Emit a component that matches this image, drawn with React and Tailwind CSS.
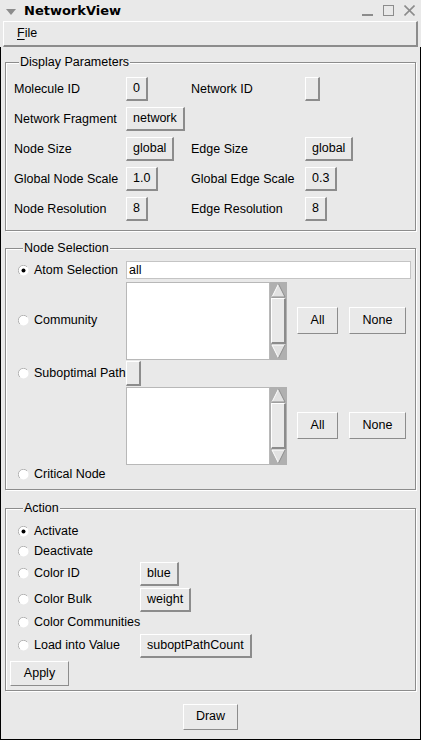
import React from 'react';

const raised =
  'flex items-center bg-[#e9e9e9] border-t border-l border-r-2 border-b-2 border-white border-r-[#8c8c8c] border-b-[#8c8c8c]';
const flat =
  'flex items-center justify-center bg-[#e9e9e9] border border-t-white border-l-white border-r-[#8c8c8c] border-b-[#8c8c8c]';
const groove =
  'border border-[#8c8c8c] shadow-[inset_1px_1px_0_#fff,1px_1px_0_#fff]';

function MenuBtn({ children, w }) {
  return <div className={`${raised} h-[24px] px-[6px] ${w || ''}`}>{children}</div>;
}

function Radio({ checked, label }) {
  return (
    <div className="flex items-center gap-[5px]">
      <svg width="11" height="11" viewBox="0 0 11 11">
        <circle cx="5.5" cy="5.5" r="5" fill="#fff" />
        <path d="M1.8 9 A5 5 0 0 1 9 1.8" stroke="#b4b4b4" strokeWidth="1" fill="none" />
        {checked && <circle cx="5.5" cy="5.5" r="2" fill="#000" />}
      </svg>
      <span>{label}</span>
    </div>
  );
}

function Frame({ title, className, children }) {
  return (
    <fieldset className={`mx-[4px] ${groove} ${className}`}>
      <legend className="ml-[5px] px-[1px] bg-[#e9e9e9] leading-[15px]">{title}</legend>
      {children}
    </fieldset>
  );
}

function Arrow({ up }) {
  return (
    <svg width="15" height="15" viewBox="0 0 15 15" className="block">
      {up ? (
        <>
          <polygon points="7.5,1 14,14 1,14" fill="#e2e2e2" />
          <path d="M1 14 L7.5 1" stroke="#fff" />
          <path d="M7.5 1 L14 14 L1 14" stroke="#8c8c8c" fill="none" />
        </>
      ) : (
        <>
          <polygon points="1,1 14,1 7.5,14" fill="#e2e2e2" />
          <path d="M1 1 L14 1 M1 1 L7.5 14" stroke="#fff" fill="none" />
          <path d="M14 1 L7.5 14" stroke="#8c8c8c" />
        </>
      )}
    </svg>
  );
}

function ListWithScroll() {
  return (
    <div className="flex h-[78px]">
      <div className="w-[144px] bg-white border border-[#b8b8b8]" />
      <div className="w-[17px] bg-[#b0b0b0] flex flex-col p-[1px]">
        <Arrow up />
        <div className={`flex-1 ${raised} border-r border-b border-r-[#8c8c8c] border-b-[#8c8c8c]`} />
        <Arrow />
      </div>
    </div>
  );
}

function AllNone() {
  return (
    <div className="flex items-center gap-[11px] ml-[10px]">
      <div className={`${flat} w-[41px] h-[27px]`}>All</div>
      <div className={`${flat} w-[57px] h-[27px]`}>None</div>
    </div>
  );
}

export default function App() {
  return (
    <div className="w-[421px] h-[740px] bg-[#e9e9e9] flex flex-col text-[12.5px] text-black font-['Liberation_Sans',Arial,sans-serif] overflow-hidden">
      {/* title bar */}
      <div className="h-[21px] flex items-center shrink-0">
        <svg width="10" height="6" viewBox="0 0 10 6" className="ml-[6px] mt-[2px]">
          <polygon points="0,0 10,0 5,6" fill="#8c8c8c" />
        </svg>
        <span className="ml-[8px] font-['DejaVu_Sans',sans-serif] font-bold text-[13px]">NetworkView</span>
        <div className="ml-auto mr-[6px] flex items-center gap-[10px]">
          <svg width="11" height="12" viewBox="0 0 11 12">
            <rect x="0" y="9" width="11" height="2" fill="#8c8c8c" />
          </svg>
          <svg width="11" height="12" viewBox="0 0 11 12">
            <rect x="0.5" y="0.5" width="10" height="10" fill="none" stroke="#8c8c8c" />
          </svg>
          <svg width="11" height="12" viewBox="0 0 11 12">
            <path d="M0.5 0.5 L10.5 10.5 M10.5 0.5 L0.5 10.5" stroke="#8c8c8c" strokeWidth="1.6" />
          </svg>
        </div>
      </div>

      {/* menubar */}
      <div className="px-[3px] shrink-0">
        <div className={`${raised} h-[26px] pl-[13px]`}>
          <span>
            <span className="underline underline-offset-2">F</span>ile
          </span>
        </div>
      </div>

      <div className="flex-1 flex flex-col border-l border-r border-b border-black">
        <Frame title="Display Parameters" className="mt-[8px] pl-[8px] pt-[7px] pb-[9px]">
          <div className="grid grid-cols-[112px_65px_114px_1fr] auto-rows-[24px] gap-y-[6px] items-center">
            <span>Molecule ID</span>
            <div className="flex"><MenuBtn>0</MenuBtn></div>
            <span>Network ID</span>
            <div className="flex"><MenuBtn w="w-[15px] px-0" /></div>

            <span>Network Fragment</span>
            <div className="flex col-span-3"><MenuBtn>network</MenuBtn></div>

            <span>Node Size</span>
            <div className="flex"><MenuBtn>global</MenuBtn></div>
            <span>Edge Size</span>
            <div className="flex"><MenuBtn>global</MenuBtn></div>

            <span>Global Node Scale</span>
            <div className="flex"><MenuBtn>1.0</MenuBtn></div>
            <span>Global Edge Scale</span>
            <div className="flex"><MenuBtn>0.3</MenuBtn></div>

            <span>Node Resolution</span>
            <div className="flex"><MenuBtn>8</MenuBtn></div>
            <span>Edge Resolution</span>
            <div className="flex"><MenuBtn>8</MenuBtn></div>
          </div>
        </Frame>

        <Frame title="Node Selection" className="mt-[10px] pl-[12px] pr-[4px] pt-[5px] pb-[6px]">
          <div className="grid grid-cols-[108px_1fr] items-center">
            <Radio checked label="Atom Selection" />
            <div className="h-[18px] bg-white border border-[#c4c4c4] flex items-center pl-[2px]">all</div>

            <div className="col-span-2 h-[2px]" />
            <Radio label="Community" />
            <div className="flex items-center">
              <ListWithScroll />
              <AllNone />
            </div>

            <div className="col-span-2 h-[1px]" />
            <Radio label="Suboptimal Path" />
            <div className="flex"><MenuBtn w="w-[15px] h-[25px] px-0" /></div>

            <div className="col-span-2 h-[1px]" />
            <div />
            <div className="flex items-center">
              <ListWithScroll />
              <AllNone />
            </div>

            <div className="col-span-2 h-[2px]" />
            <div className="h-[16px] flex items-center">
              <Radio label="Critical Node" />
            </div>
          </div>
        </Frame>

        <Frame title="Action" className="mt-[11px] pl-[12px] pt-[6px] pb-[4px]">
          <div className="grid grid-cols-[122px_1fr] items-center">
            <div className="h-[20px] flex items-center"><Radio checked label="Activate" /></div>
            <div />
            <div className="h-[19px] flex items-center"><Radio label="Deactivate" /></div>
            <div />
            <div className="h-[26px] flex items-center"><Radio label="Color ID" /></div>
            <div className="flex"><MenuBtn>blue</MenuBtn></div>
            <div className="h-[26px] flex items-center"><Radio label="Color Bulk" /></div>
            <div className="flex"><MenuBtn>weight</MenuBtn></div>
            <div className="h-[20px] flex items-center col-span-2"><Radio label="Color Communities" /></div>
            <div className="h-[26px] flex items-center"><Radio label="Load into Value" /></div>
            <div className="flex"><MenuBtn>suboptPathCount</MenuBtn></div>
          </div>
          <div className="mt-[2px] -ml-[8px]">
            <div className={`${flat} w-[59px] h-[25px]`}>Apply</div>
          </div>
        </Frame>

        <div className="mt-[13px] flex justify-center">
          <div className={`${flat} w-[55px] h-[26px]`}>Draw</div>
        </div>
      </div>
    </div>
  );
}
